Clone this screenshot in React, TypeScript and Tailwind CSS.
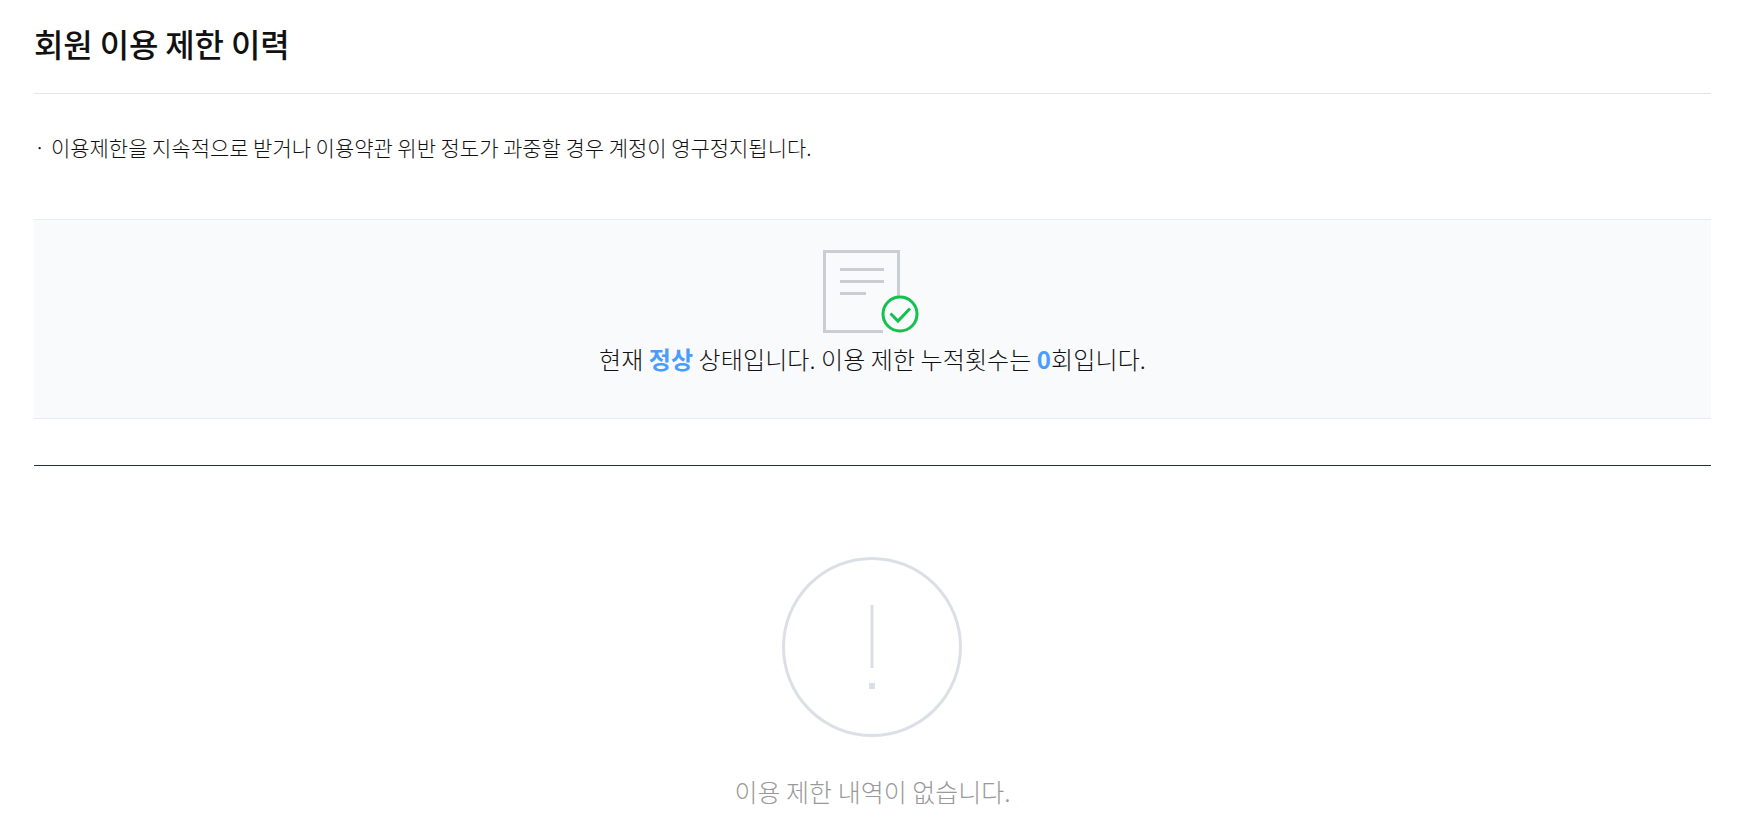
const fontStack = '"Noto Sans CJK KR", "Noto Sans", sans-serif';

function DocumentCheckIcon() {
  return (
    <svg width="98" height="88" viewBox="0 0 98 88" fill="none" className="block">
      <path d="M60 81.5H1.5V1.5H75.5V50" stroke="#c9ced3" strokeWidth="3" />
      <path d="M17 19.5H61M17 31.5H61M17 43.5H43" stroke="#c9ced3" strokeWidth="3" />
      <circle cx="77" cy="64" r="17" fill="#f9fafc" stroke="#12c24d" strokeWidth="3" />
      <path d="M67.5 63.5L75 71L87 58.5" stroke="#12c24d" strokeWidth="3" />
    </svg>
  );
}

function WarningIcon() {
  return (
    <svg width="180" height="180" viewBox="0 0 180 180" fill="none" className="block">
      <circle cx="90" cy="90" r="88.5" stroke="#dce0e6" strokeWidth="3" />
      <path d="M90 48V111" stroke="#dce0e6" strokeWidth="3" />
      <rect x="87" y="126" width="6" height="6" fill="#dce0e6" />
    </svg>
  );
}

export default function App() {
  return (
    <div className="bg-white h-[836px] overflow-hidden pl-[34px] pr-[32px] text-[#1a1a1a]" style={{ fontFamily: fontStack }}>
      <h1 className="h-[94px] border-b border-[#e4e4e6] pt-[19px] text-[32px] leading-[48px] font-medium tracking-[-0.15px] text-[#111111]">
        회원 이용 제한 이력
      </h1>

      <p className="h-[125px] pt-[37px] text-[21px] leading-[32px] font-light tracking-[-0.03px] text-[#111111]">
        <span className="inline-block w-[17px]">·</span>
        이용제한을 지속적으로 받거나 이용약관 위반 정도가 과중할 경우 계정이 영구정지됩니다.
      </p>

      <section className="flex h-[200px] flex-col items-center border-y border-[#e9ebee] bg-[#f9fafc] pt-[30px]">
        <div className="pr-[2px]">
          <DocumentCheckIcon />
        </div>
        <p className="mt-[3px] text-[24px] leading-[36px] font-light tracking-[0.1px] text-[#111111]">
          현재 <b className="font-bold text-[#4a9dff]">정상</b> 상태입니다. 이용 제한 누적횟수는{' '}
          <b className="font-bold text-[#4a9dff]">0</b>회입니다.
        </p>
      </section>

      <section className="mt-[46px] flex flex-col items-center border-t border-[#25303a] pt-[91px]">
        <div className="pr-[2px]">
          <WarningIcon />
        </div>
        <p className="mt-[36px] text-[25px] leading-[36px] font-light text-[#999999]">이용 제한 내역이 없습니다.</p>
      </section>
    </div>
  );
}
